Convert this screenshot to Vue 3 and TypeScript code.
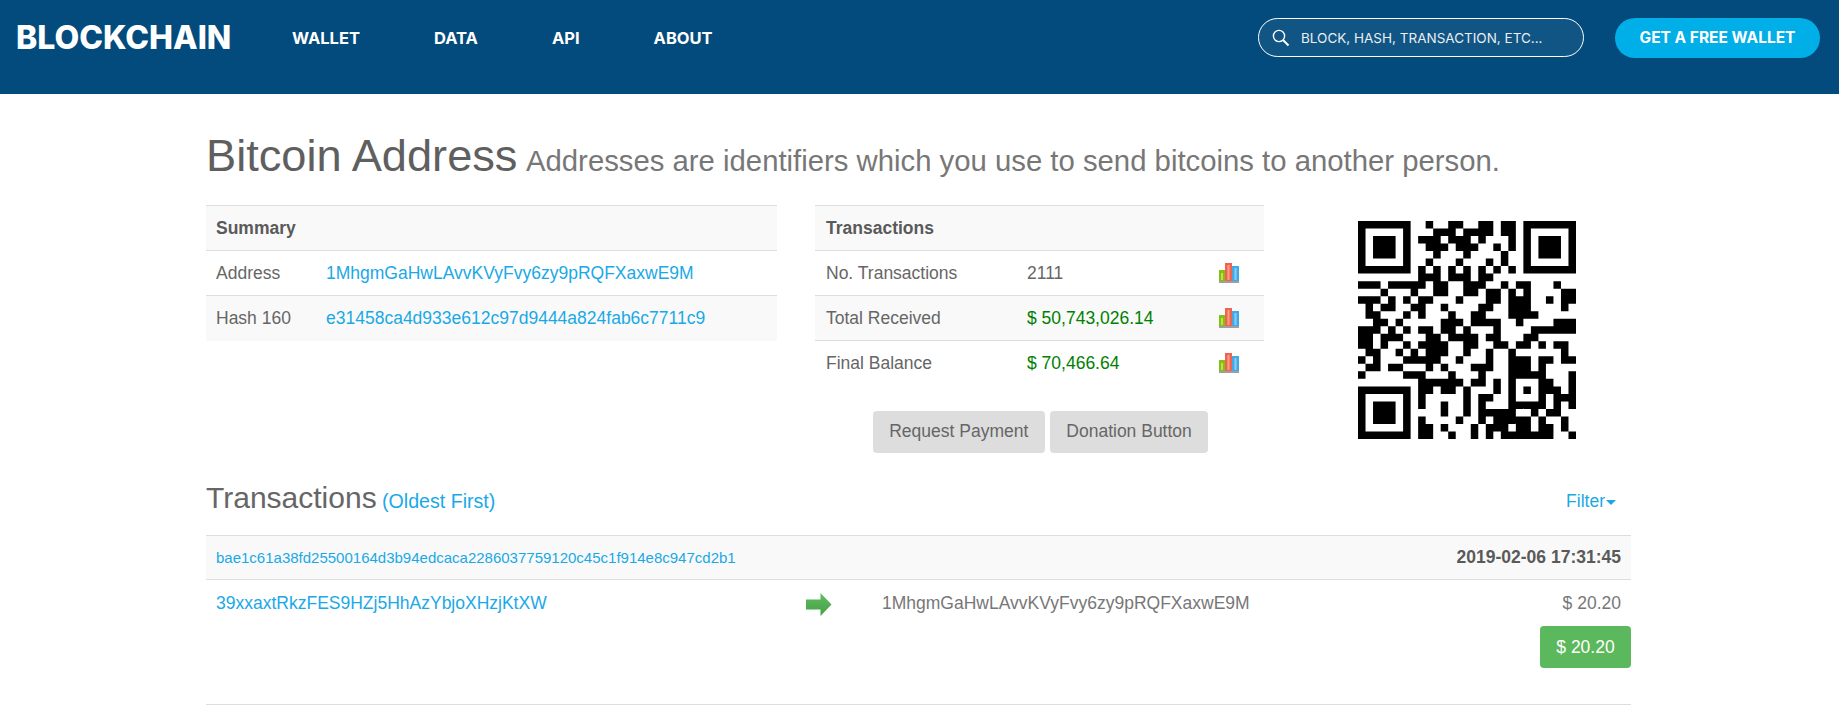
<script setup lang="ts">
import { computed, type ComputedRef } from 'vue';

interface SummaryRow {
  label: string;
  value: string;
}

interface StatRow {
  label: string;
  value: string;
  money: boolean;
}

const navItems: string[] = ['WALLET', 'DATA', 'API', 'ABOUT'];

const summaryRows: SummaryRow[] = [
  { label: 'Address', value: '1MhgmGaHwLAvvKVyFvy6zy9pRQFXaxwE9M' },
  { label: 'Hash 160', value: 'e31458ca4d933e612c97d9444a824fab6c7711c9' },
];

const statRows: StatRow[] = [
  { label: 'No. Transactions', value: '2111', money: false },
  { label: 'Total Received', value: '$ 50,743,026.14', money: true },
  { label: 'Final Balance', value: '$ 70,466.64', money: true },
];

// read off the reference, 29 x 29 modules
const qrRows: string[] = [
  '11111110010011001101101111111',
  '10000010001110111101101000001',
  '10111010111011101000101011101',
  '10111010011101110010101011101',
  '10111010001000100001001011101',
  '10000010010001000101001000001',
  '11111110101010101010101111111',
  '00000000111011101100000000000',
  '11101111101100111001011000100',
  '00010001001100110110101000011',
  '11101010110001000110111001011',
  '01011001100100001100111000010',
  '01100010100010011000111100000',
  '00110100000111011110010000111',
  '11101010110110100010000111111',
  '11011100011011110110001100000',
  '11010010111100110011011010110',
  '01100101011100100100100000010',
  '10100011111001000100111011011',
  '01101100010100011100111010000',
  '10000011100010001000111110001',
  '00000000111111011010100011001',
  '11111110110110100010101011101',
  '10000010100000101100100010111',
  '10111010100100101000111110101',
  '10111010000100101111100101100',
  '10111010100001001011111010010',
  '10000010110100010111011011010',
  '11111110110010010101111111001',
];

const qrPath: ComputedRef<string> = computed<string>(() => {
  let d: string = '';
  qrRows.forEach((row: string, y: number) => {
    for (let x: number = 0; x < row.length; x++) {
      if (row[x] === '1') {
        d += `M${x} ${y}h1v1h-1z`;
      }
    }
  });
  return d;
});
</script>

<template>
  <div class="page">
    <header class="topbar">
      <div class="brand">BLOCKCHAIN</div>
      <nav class="nav">
        <a v-for="item in navItems" :key="item" class="nav-link">{{ item }}</a>
      </nav>
      <div class="topbar-right">
        <div class="search">
          <svg class="search-icon" width="18" height="18" viewBox="0 0 18 18">
            <circle cx="7" cy="7" r="5.6" fill="none" stroke="#fff" stroke-width="1.4" />
            <path d="M11 11l5.5 5.5" fill="none" stroke="#fff" stroke-width="2" />
          </svg>
          <span class="search-text">BLOCK, HASH, TRANSACTION, ETC...</span>
        </div>
        <a class="wallet-btn">GET A FREE WALLET</a>
      </div>
    </header>

    <main class="container">
      <h1 class="title">Bitcoin Address<small> Addresses are identifiers which you use to send bitcoins to another person.</small></h1>

      <section class="overview">
        <table class="table summary">
          <thead>
            <tr><th colspan="2">Summary</th></tr>
          </thead>
          <tbody>
            <tr v-for="row in summaryRows" :key="row.label">
              <td class="summary-label">{{ row.label }}</td>
              <td><a class="link">{{ row.value }}</a></td>
            </tr>
          </tbody>
        </table>

        <div class="stats">
          <table class="table">
            <thead>
              <tr><th colspan="3">Transactions</th></tr>
            </thead>
            <tbody>
              <tr v-for="row in statRows" :key="row.label">
                <td class="stat-label">{{ row.label }}</td>
                <td :class="{ money: row.money }">{{ row.value }}</td>
                <td class="stat-chart">
                  <svg class="chart" width="20" height="20" viewBox="0 0 20 20">
                    <rect x="0" y="7" width="6" height="11" fill="#86bf14" />
                    <rect x="2" y="10" width="2" height="7" fill="#bce04e" />
                    <rect x="6" y="0" width="7" height="18" fill="#ee6450" />
                    <rect x="8.5" y="2" width="2" height="15" fill="#f99f88" />
                    <rect x="13" y="3" width="7" height="15" fill="#45a8e6" />
                    <rect x="15.5" y="5" width="2" height="12" fill="#8ccdf7" />
                    <rect x="0" y="18" width="20" height="2" fill="#9f9f9f" />
                  </svg>
                </td>
              </tr>
            </tbody>
          </table>
          <div class="stat-actions">
            <button class="grey-btn">Request Payment</button>
            <button class="grey-btn">Donation Button</button>
          </div>
        </div>

        <div class="qr-box">
          <svg class="qr" width="218" height="218" viewBox="0 0 29 29">
            <path :d="qrPath" fill="#000" />
          </svg>
        </div>
      </section>

      <section class="tx-head">
        <h2 class="tx-title">Transactions<small class="link"> (Oldest First)</small></h2>
        <a class="filter link">Filter<span class="caret"></span></a>
      </section>

      <section class="tx">
        <div class="tx-bar">
          <a class="link tx-hash">bae1c61a38fd25500164d3b94edcaca2286037759120c45c1f914e8c947cd2b1</a>
          <strong class="tx-date">2019-02-06 17:31:45</strong>
        </div>
        <div class="tx-body">
          <a class="link">39xxaxtRkzFES9HZj5HhAzYbjoXHzjKtXW</a>
          <svg class="arrow" width="26" height="24" viewBox="0 0 26 24">
            <defs>
              <linearGradient id="arrowFill" x1="0" y1="0" x2="0" y2="1">
                <stop offset="0" stop-color="#62bd62" />
                <stop offset="1" stop-color="#45a045" />
              </linearGradient>
            </defs>
            <path d="M0 6.5h14.5V0L25.5 11.5 14.5 23V16.5H0z" fill="url(#arrowFill)" />
          </svg>
          <span class="tx-to">1MhgmGaHwLAvvKVyFvy6zy9pRQFXaxwE9M</span>
          <div class="tx-amounts">
            <span class="tx-amount">$ 20.20</span>
            <span class="green-btn">$ 20.20</span>
          </div>
        </div>
      </section>
    </main>
  </div>
</template>

<style>
html,
body {
  margin: 0;
  background: #fff;
  overflow: hidden;
}
</style>

<style scoped>
.page {
  font-family: 'Liberation Sans', Arial, sans-serif;
  font-size: 17.5px;
  color: #666;
}

.topbar {
  height: 94px;
  box-sizing: border-box;
  padding: 18px 19px 0 16px;
  display: flex;
  align-items: flex-start;
  background-color: #034b7d;
  font-family: Inter, sans-serif;
  color: #fff;
}

.brand {
  width: 276px;
  height: 39px;
  line-height: 39px;
  font-size: 32px;
  font-weight: 800;
}

.nav {
  display: flex;
  gap: 74px;
  height: 39px;
  align-items: center;
}

.nav-link {
  font-size: 16.5px;
  font-weight: 700;
}

.topbar-right {
  margin-left: auto;
  display: flex;
  gap: 31px;
}

.search {
  width: 326px;
  height: 39px;
  box-sizing: border-box;
  padding-left: 13px;
  display: flex;
  align-items: center;
  gap: 11px;
  border: 1px solid #fff;
  border-radius: 20px;
  background-color: rgba(255, 255, 255, 0.06);
}

.search-text {
  font-size: 13.5px;
  color: #e8eef3;
}

.wallet-btn {
  width: 205px;
  height: 40px;
  line-height: 40px;
  text-align: center;
  border-radius: 20px;
  background-color: #00aee8;
  font-size: 15.5px;
  font-weight: 700;
}

.container {
  width: 1425px;
  margin-left: 206px;
}

.title {
  margin: 36px 0 0;
  height: 75px;
  font-size: 45.2px;
  line-height: 52px;
  font-weight: 400;
  color: #5f5f5f;
}

.title small {
  margin-left: 2px;
  font-size: 29.3px;
  color: #777;
}

.overview {
  display: flex;
  align-items: flex-start;
  gap: 38px;
}

.table {
  border-collapse: collapse;
  width: 100%;
}

.table th,
.table td {
  height: 45px;
  box-sizing: border-box;
  padding: 0 10px;
  border-top: 1px solid #ddd;
  text-align: left;
  white-space: nowrap;
}

.table thead th {
  background-color: #f9f9f9;
  font-weight: 700;
  color: #5a5a5a;
}

.summary {
  width: 571px;
  flex: none;
}

.summary tbody tr:nth-child(even) td,
.stats tbody tr:nth-child(even) td {
  background-color: #f9f9f9;
}

.summary-label {
  width: 110px;
}

.link {
  color: #1aa9e6;
}

.stats {
  width: 449px;
  flex: none;
}

.stats .table th,
.stats .table .stat-label {
  padding-left: 11px;
}

.stat-label {
  width: 202px;
}

.stat-chart {
  width: 55px;
}

.chart {
  display: block;
}

.money {
  color: #008000;
}

.stat-actions {
  display: flex;
  justify-content: center;
  gap: 5px;
  margin-top: 25px;
  padding-left: 2px;
}

.grey-btn {
  height: 42px;
  padding: 0 16.5px;
  border: none;
  border-radius: 4px;
  background-color: #ddd;
  color: #666;
  font-family: inherit;
  font-size: 17.5px;
}

.qr-box {
  flex: 1;
  display: flex;
  justify-content: center;
  padding-top: 16px;
}

.qr {
  display: block;
}

.tx-head {
  display: flex;
  justify-content: space-between;
  align-items: center;
  height: 44px;
  margin-top: 23px;
  padding-right: 15px;
}

.tx-title {
  margin: 0;
  font-size: 30px;
  font-weight: 400;
  color: #666;
}

.tx-title small {
  font-size: 19.6px;
}

.filter {
  margin-top: 8px;
  font-size: 17.5px;
}

.caret {
  display: inline-block;
  margin-left: 1px;
  vertical-align: middle;
  border-top: 5px solid #1aa9e6;
  border-left: 5px solid transparent;
  border-right: 5px solid transparent;
}

.tx {
  margin-top: 15px;
  border-bottom: 1px solid #ddd;
}

.tx-bar {
  height: 45px;
  box-sizing: border-box;
  padding: 0 10px;
  display: flex;
  justify-content: space-between;
  align-items: center;
  background-color: #f9f9f9;
  border-top: 1px solid #ddd;
  border-bottom: 1px solid #ddd;
}

.tx-hash {
  font-size: 15px;
}

.tx-date {
  color: #5a5a5a;
}

.tx-body {
  height: 124px;
  box-sizing: border-box;
  display: grid;
  grid-template-columns: 590px 76px 1fr auto;
  align-items: start;
  padding: 13px 0 0 10px;
}

.arrow {
  display: block;
}

.tx-to {
  color: #777;
}

.tx-amounts {
  display: flex;
  flex-direction: column;
  align-items: flex-end;
  gap: 12px;
}

.tx-amount {
  color: #777;
  padding-right: 10px;
}

.green-btn {
  width: 91px;
  height: 42px;
  line-height: 42px;
  text-align: center;
  border-radius: 4px;
  background-color: #5cb85c;
  color: #fff;
}
</style>
